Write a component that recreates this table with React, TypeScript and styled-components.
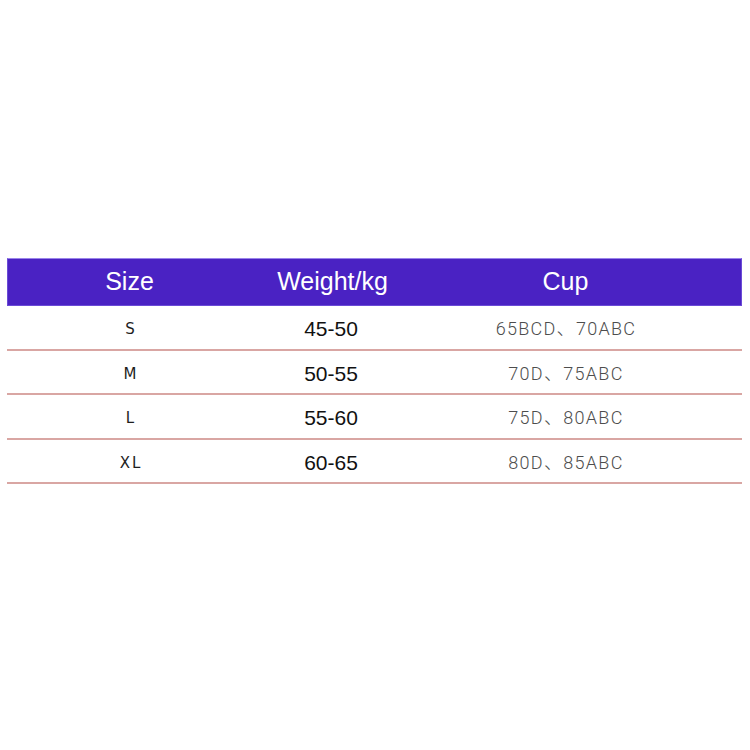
import React from 'react'
import styled, { createGlobalStyle } from 'styled-components'

const GlobalStyle = createGlobalStyle`
  html, body {
    margin: 0;
    padding: 0;
    background: #ffffff;
  }
`

const Page = styled.div`
  width: 750px;
  height: 750px;
  padding-top: 258px;
  box-sizing: border-box;
`

const Table = styled.div`
  margin-left: 7px;
  width: 735px;
`

const Columns = `
  display: grid;
  grid-template-columns: 246px 160px 306px 23px;
  align-items: center;
`

const HeaderRow = styled.div`
  ${Columns}
  height: 48px;
  box-sizing: border-box;
  background: #4a22c3;
  border: 1px solid #6b4bd6;
  border-top-color: #9a83ea;
`

const HeaderCell = styled.div`
  text-align: center;
  color: #ffffff;
  font-family: 'Liberation Sans', Arial, sans-serif;
  font-size: 25px;
  line-height: 1;
  padding-bottom: 1px;
  padding-right: 3px;
`

const Row = styled.div`
  ${Columns}
  height: 44.5px;
  box-sizing: border-box;
  border-bottom: 2px solid #d9a6a3;
`

const SizeCell = styled.div`
  text-align: center;
  color: #1e1e1e;
  font-family: 'DejaVu Sans', 'Noto Sans', sans-serif;
  font-size: 15px;
  letter-spacing: 2px;
  padding-left: 2px;
  padding-top: 4px;
`

const WeightCell = styled.div`
  text-align: center;
  color: #111111;
  font-family: 'Liberation Sans', Arial, sans-serif;
  font-size: 21px;
  padding-top: 4px;
  padding-right: 4px;
`

const CupCell = styled.div`
  text-align: center;
  color: #4d4d4d;
  font-family: Roboto, 'Noto Sans CJK SC', sans-serif;
  font-weight: 300;
  font-size: 18px;
  letter-spacing: 1.3px;
`

const rows = [
  { size: 'S', weight: '45-50', cup: '65BCD、70ABC' },
  { size: 'M', weight: '50-55', cup: '70D、75ABC' },
  { size: 'L', weight: '55-60', cup: '75D、80ABC' },
  { size: 'XL', weight: '60-65', cup: '80D、85ABC' },
]

const App: React.FC = () => (
  <Page>
    <GlobalStyle />
    <Table>
      <HeaderRow>
        <HeaderCell>Size</HeaderCell>
        <HeaderCell>Weight/kg</HeaderCell>
        <HeaderCell>Cup</HeaderCell>
      </HeaderRow>
      {rows.map((r) => (
        <Row key={r.size}>
          <SizeCell>{r.size}</SizeCell>
          <WeightCell>{r.weight}</WeightCell>
          <CupCell>{r.cup}</CupCell>
        </Row>
      ))}
    </Table>
  </Page>
)

export default App
